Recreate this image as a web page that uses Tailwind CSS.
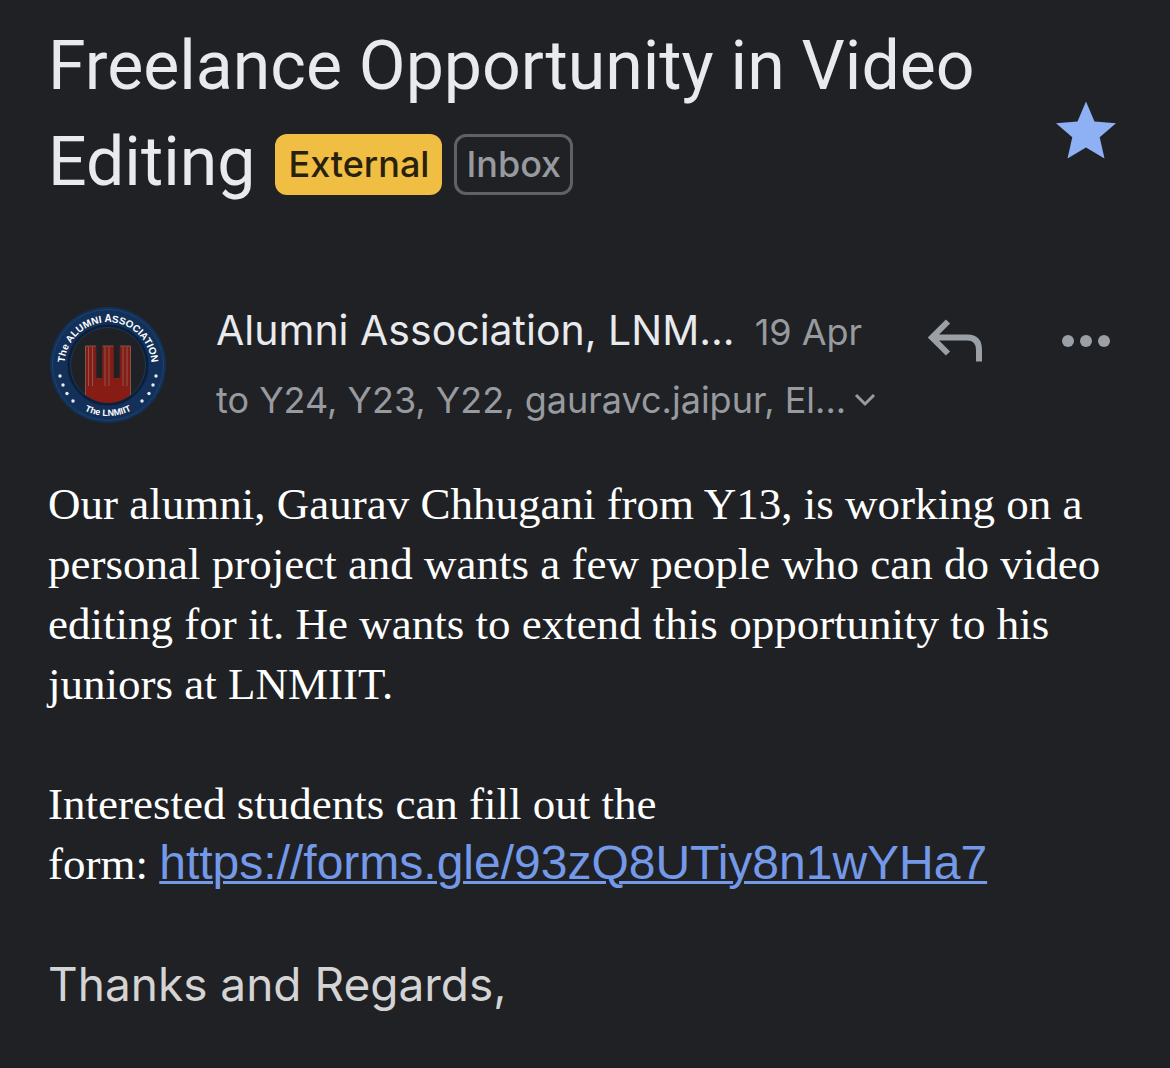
<!DOCTYPE html>
<html lang="en">
<head>
<meta charset="utf-8">
<meta name="viewport" content="width=device-width, initial-scale=1">
<title>Freelance Opportunity in Video Editing</title>
<script src="https://cdn.jsdelivr.net/npm/@tailwindcss/browser@4"></script>
</head>
<body class="min-h-screen bg-[#202124] font-['Inter',sans-serif] text-[#e8eaed]">
<main class="px-12 pt-[18px] pb-6">
  <div class="flex items-center justify-between gap-6">
    <div class="flex-1 font-['Roboto',sans-serif] text-[68px] leading-[96px]">
      <h1>Freelance Opportunity in Video<br>
        <span class="flex items-center gap-3">
          <span class="mr-2">Editing</span>
          <span class="mt-1 flex h-[61px] items-center rounded-xl bg-[#f0be42] px-[13px] font-['Inter',sans-serif] text-[36px] font-medium text-[#28210f]">External</span>
          <span class="mt-1 flex h-[61px] items-center rounded-xl border-3 border-[#5f6164] px-[9px] font-['Inter',sans-serif] text-[36px] font-medium text-[#979ba0]">Inbox</span>
        </span>
      </h1>
    </div>
    <button type="button" aria-label="Starred" class="mr-1 mt-8 shrink-0">
      <svg class="h-[64px] w-[64px]" viewBox="0 0 64 64" fill="#8eb0f5"><path d="M32 3.500L40.500 23.500L62 25.200L45.700 39.300L50.500 60.500L32 49.500L13.500 60.500L18.300 39.300L2 25.200L23.500 23.500Z"/></svg>
    </button>
  </div>

  <header class="mt-[88px] flex items-start">
    <svg class="mt-[7px] size-[120px] shrink-0" viewBox="0 0 120 120" role="img" aria-label="The Alumni Association, The LNMIIT">
      <defs>
        <path id="top-arc" d="M17.500 70A43.500 43.500 0 1 1 102.500 70"/>
        <path id="bottom-arc" d="M9 60A51 51 0 0 0 111 60"/>
      </defs>
      <circle cx="60" cy="60" r="58" fill="#123058"/>
      <circle cx="60" cy="60" r="55.500" fill="none" stroke="#1b4375" stroke-width="1"/>
      <circle cx="60" cy="60" r="39.500" fill="#202124" stroke="#0b1f3d" stroke-width="2"/>
      <circle cx="60" cy="60" r="37.500" fill="none" stroke="#173660" stroke-width="1"/>
      <path d="M37.500 41H48V73H54.500V41H65.500V73H72V41H82.500V90Q60 106 37.500 90Z" fill="#861c14"/>
      <path d="M37.500 90V41H48M54.500 41H65.500M72 41H82.500V90M40.500 42V81M44.500 42V81M57 42V81M61 42V81M75 42V81M79 42V81" fill="none" stroke="#8d7069" stroke-width=".7"/>
      <path d="M48 42V73M54.500 42V73M65.500 42V73M72 42V73" stroke="#5d201c" stroke-width="1"/>
      <g fill="#fff" font-family="Liberation Sans, sans-serif" font-weight="700">
        <text font-size="10" text-anchor="middle"><textPath href="#top-arc" startOffset="50%">The ALUMNI ASSOCIATION</textPath></text>
        <text font-size="9" text-anchor="middle"><textPath href="#bottom-arc" startOffset="50%">The LNMIIT</textPath></text>
      </g>
      <g fill="#e8edf5">
        <circle cx="12" cy="71" r="1.700"/><circle cx="15" cy="80" r="1.700"/><circle cx="19" cy="88.500" r="1.700"/><circle cx="25" cy="96" r="1.700"/>
        <circle cx="108" cy="71" r="1.700"/><circle cx="105" cy="80" r="1.700"/><circle cx="101" cy="88.500" r="1.700"/><circle cx="94" cy="96" r="1.700"/>
      </g>
    </svg>
    <div class="ml-12 min-w-0 flex-1">
      <div class="flex items-baseline gap-5 whitespace-nowrap leading-[64px]">
        <span class="text-[41px]">Alumni Association, LNM...</span>
        <span class="text-[36px] text-[#979ba0]">19 Apr</span>
      </div>
      <button type="button" class="flex items-center gap-2 whitespace-nowrap text-[36px] leading-[72px] text-[#979ba0]">
        <span>to Y24, Y23, Y22, gauravc.jaipur, El...</span>
        <svg class="h-[14px] w-[22px]" viewBox="0 0 22 14" fill="none" stroke="currentColor" stroke-width="3"><path d="M2 2L11 11L20 2"/></svg>
      </button>
    </div>
    <div class="mt-[21px] flex shrink-0 items-center gap-20 text-[#9aa0a6]">
      <button type="button" aria-label="Reply">
        <svg class="h-[44px] w-[54px]" viewBox="0 0 54 44" fill="none" stroke="currentColor" stroke-width="6"><path d="M20 2.500L4 18.500L20 34.500M4 18.500H39.500Q51 18.500 51 31V42.500"/></svg>
      </button>
      <button type="button" aria-label="More options" class="mr-3">
        <svg class="h-[12px] w-[48px]" viewBox="0 0 48 12" fill="currentColor"><circle cx="6" cy="6" r="6"/><circle cx="24" cy="6" r="6"/><circle cx="42" cy="6" r="6"/></svg>
      </button>
    </div>
  </header>

  <article class="mt-[38px] whitespace-nowrap font-['Liberation_Serif',serif] text-[45px] leading-[60px] text-white">
    <p>Our alumni, Gaurav Chhugani from Y13, is working on a<br>personal project and wants a few people who can do video<br>editing for it. He wants to extend this opportunity to his<br>juniors at LNMIIT.</p>
    <p class="mt-[60px]">Interested students can fill out the<br>form:&nbsp;<a href="https://forms.gle/93zQ8UTiy8n1wYHa7" class="font-['Liberation_Sans',sans-serif] text-[48px] leading-none text-[#7399e8] underline decoration-3">https://forms.gle/93zQ8UTiy8n1wYHa7</a></p>
    <p class="mt-[60px] font-['Inter',sans-serif] text-[46px] text-[#d4d4d4]">Thanks and Regards,</p>
  </article>
</main>
</body>
</html>
